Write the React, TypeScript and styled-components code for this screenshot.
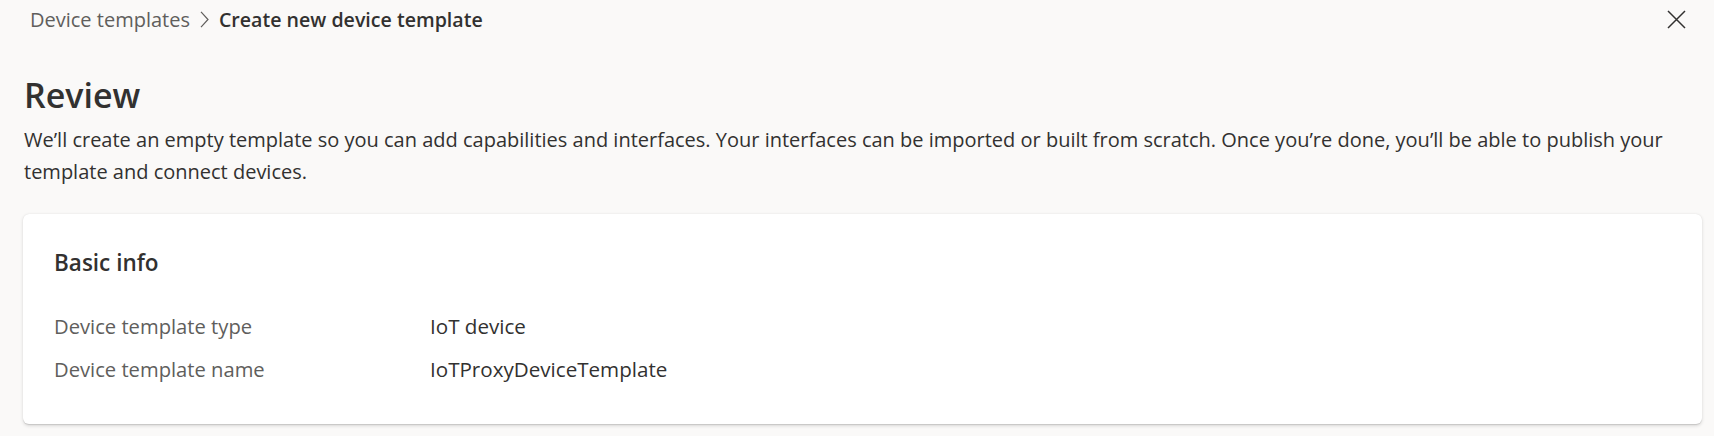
import React from "react";
import styled, { createGlobalStyle } from "styled-components";

const Global = createGlobalStyle`
  html, body { margin: 0; padding: 0; background: #faf9f8; }
  body { font-family: "Open Sans", "Noto Sans", sans-serif; color: #323130; }
`;

const Page = styled.div`
  min-height: 436px;
  background: #faf9f8;
  padding: 0 12px 0 23px;
  box-sizing: border-box;
`;

const Header = styled.div`
  height: 38px;
  display: flex;
  align-items: center;
  justify-content: space-between;
  padding: 0 16px 0 7px;
`;

const Crumbs = styled.nav`
  display: flex;
  align-items: center;
  gap: 10px;
  font-size: 20px;
`;

const Crumb = styled.span<{ $current?: boolean }>`
  color: ${(p) => (p.$current ? "#323130" : "#605e5c")};
  font-weight: ${(p) => (p.$current ? 600 : 400)};
  font-size: ${(p) => (p.$current ? "19.6px" : "20px")};
`;

const CloseButton = styled.button`
  border: none;
  background: transparent;
  padding: 0;
  width: 20px;
  height: 20px;
  display: flex;
  align-items: center;
  justify-content: center;
  cursor: pointer;
`;

const Title = styled.h1`
  margin: 36px 0 0 1px;
  font-size: 34px;
  line-height: 43px;
  font-weight: 600;
  color: #323130;
`;

const Description = styled.p`
  margin: 7px 0 0 1px;
  font-size: 20px;
  line-height: 32px;
  color: #323130;
`;

const Card = styled.section`
  margin-top: 26px;
  background: #ffffff;
  border-radius: 6px;
  box-shadow: 0 1.6px 3.6px rgba(0, 0, 0, 0.13), 0 0.3px 0.9px rgba(0, 0, 0, 0.11);
  padding: 35px 31px 43px;
`;

const CardTitle = styled.h2`
  margin: 0;
  font-size: 22.5px;
  line-height: 28px;
  font-weight: 600;
  color: #323130;
`;

const InfoList = styled.dl`
  margin: 37px 0 0;
  display: grid;
  grid-template-columns: 376px 1fr;
  row-gap: 19px;
  font-size: 20.2px;
  line-height: 24px;
`;

const Label = styled.dt`
  margin: 0;
  color: #605e5c;
`;

const Value = styled.dd`
  margin: 0;
  color: #323130;
  font-size: 20.6px;
`;

const rows = [
  ["Device template type", "IoT device"],
  ["Device template name", "IoTProxyDeviceTemplate"],
];

export default function App() {
  return (
    <>
      <Global />
      <Page>
        <Header>
          <Crumbs>
            <Crumb>Device templates</Crumb>
            <svg width="9" height="17" viewBox="0 0 9 17">
              <path d="M1 0.8 L8 8.5 L1 16.2" fill="none" stroke="#605e5c" strokeWidth="1.2" />
            </svg>
            <Crumb $current>Create new device template</Crumb>
          </Crumbs>
          <CloseButton aria-label="Close">
            <svg width="19" height="19" viewBox="0 0 19 19">
              <path d="M1 1 L18 18 M18 1 L1 18" stroke="#323130" strokeWidth="1.5" />
            </svg>
          </CloseButton>
        </Header>
        <Title>Review</Title>
        <Description>
          We’ll create an empty template so you can add capabilities and interfaces. Your interfaces can be imported or built from scratch. Once you’re done, you’ll be able to publish your template and connect devices.
        </Description>
        <Card>
          <CardTitle>Basic info</CardTitle>
          <InfoList>
            {rows.map(([k, v]) => (
              <React.Fragment key={k}>
                <Label>{k}</Label>
                <Value>{v}</Value>
              </React.Fragment>
            ))}
          </InfoList>
        </Card>
      </Page>
    </>
  );
}
